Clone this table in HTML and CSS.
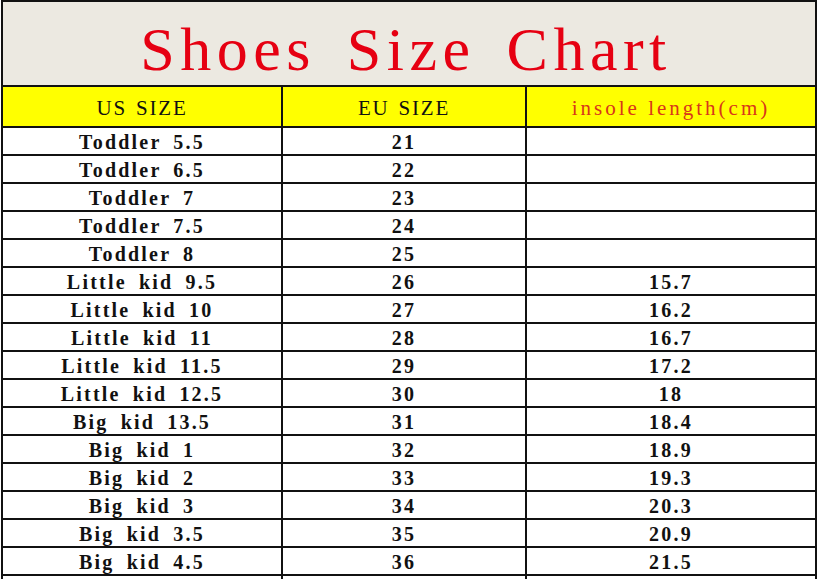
FILE: index.html
```html
<!DOCTYPE html>
<html lang="en">
<head>
<meta charset="utf-8">
<title>Shoes Size Chart</title>
<link rel="stylesheet" href="styles.css">
</head>
<body>
<table class="chart">
  <colgroup>
    <col class="c-us">
    <col class="c-eu">
    <col class="c-len">
  </colgroup>
  <tr class="title-row"><td colspan="3">Shoes Size Chart</td></tr>
  <tr class="head-row">
    <td>US SIZE</td>
    <td>EU SIZE</td>
    <td class="red">insole length(cm)</td>
  </tr>
  <tr><td>Toddler 5.5</td><td>21</td><td></td></tr>
  <tr><td>Toddler 6.5</td><td>22</td><td></td></tr>
  <tr><td>Toddler 7</td><td>23</td><td></td></tr>
  <tr><td>Toddler 7.5</td><td>24</td><td></td></tr>
  <tr><td>Toddler 8</td><td>25</td><td></td></tr>
  <tr><td>Little kid 9.5</td><td>26</td><td>15.7</td></tr>
  <tr><td>Little kid 10</td><td>27</td><td>16.2</td></tr>
  <tr><td>Little kid 11</td><td>28</td><td>16.7</td></tr>
  <tr><td>Little kid 11.5</td><td>29</td><td>17.2</td></tr>
  <tr><td>Little kid 12.5</td><td>30</td><td>18</td></tr>
  <tr><td>Big kid 13.5</td><td>31</td><td>18.4</td></tr>
  <tr><td>Big kid 1</td><td>32</td><td>18.9</td></tr>
  <tr><td>Big kid 2</td><td>33</td><td>19.3</td></tr>
  <tr><td>Big kid 3</td><td>34</td><td>20.3</td></tr>
  <tr><td>Big kid 3.5</td><td>35</td><td>20.9</td></tr>
  <tr><td>Big kid 4.5</td><td>36</td><td>21.5</td></tr>
  <tr><td></td><td></td><td></td></tr>
</table>
</body>
</html>
```

FILE: styles.css
```css
html, body {
  margin: 0;
  padding: 0;
  background: #ffffff;
}

body {
  padding-left: 1px;
  font-family: "Liberation Serif", "Times New Roman", serif;
  color: #111111;
  overflow: hidden;
}

.chart {
  border-collapse: collapse;
  table-layout: fixed;
  width: 816px;
}

.c-us { width: 280px; }
.c-eu { width: 244px; }
.c-len { width: 290px; }

.chart td {
  border: 2px solid #111111;
  padding: 2px 0 0;
  height: 24px;
  text-align: center;
  vertical-align: middle;
  white-space: nowrap;
  background: #ffffff;
  font-size: 20px;
  font-weight: bold;
  letter-spacing: 2.2px;
  word-spacing: 5px;
  line-height: 20px;
}

.title-row td {
  background: #ece9e1;
  font-size: 62px;
  font-weight: normal;
  letter-spacing: 5.5px;
  word-spacing: 10px;
  line-height: 62px;
  padding: 10px 6px 0 0;
  height: 73px;
  color: #e60012;
}

.head-row td {
  height: 37px;
  background: #ffff00;
  font-size: 21px;
  font-weight: normal;
  letter-spacing: 1.8px;
  word-spacing: 2px;
}

.head-row td.red {
  color: #d8361a;
  letter-spacing: 3px;
  word-spacing: 0;
}
```
